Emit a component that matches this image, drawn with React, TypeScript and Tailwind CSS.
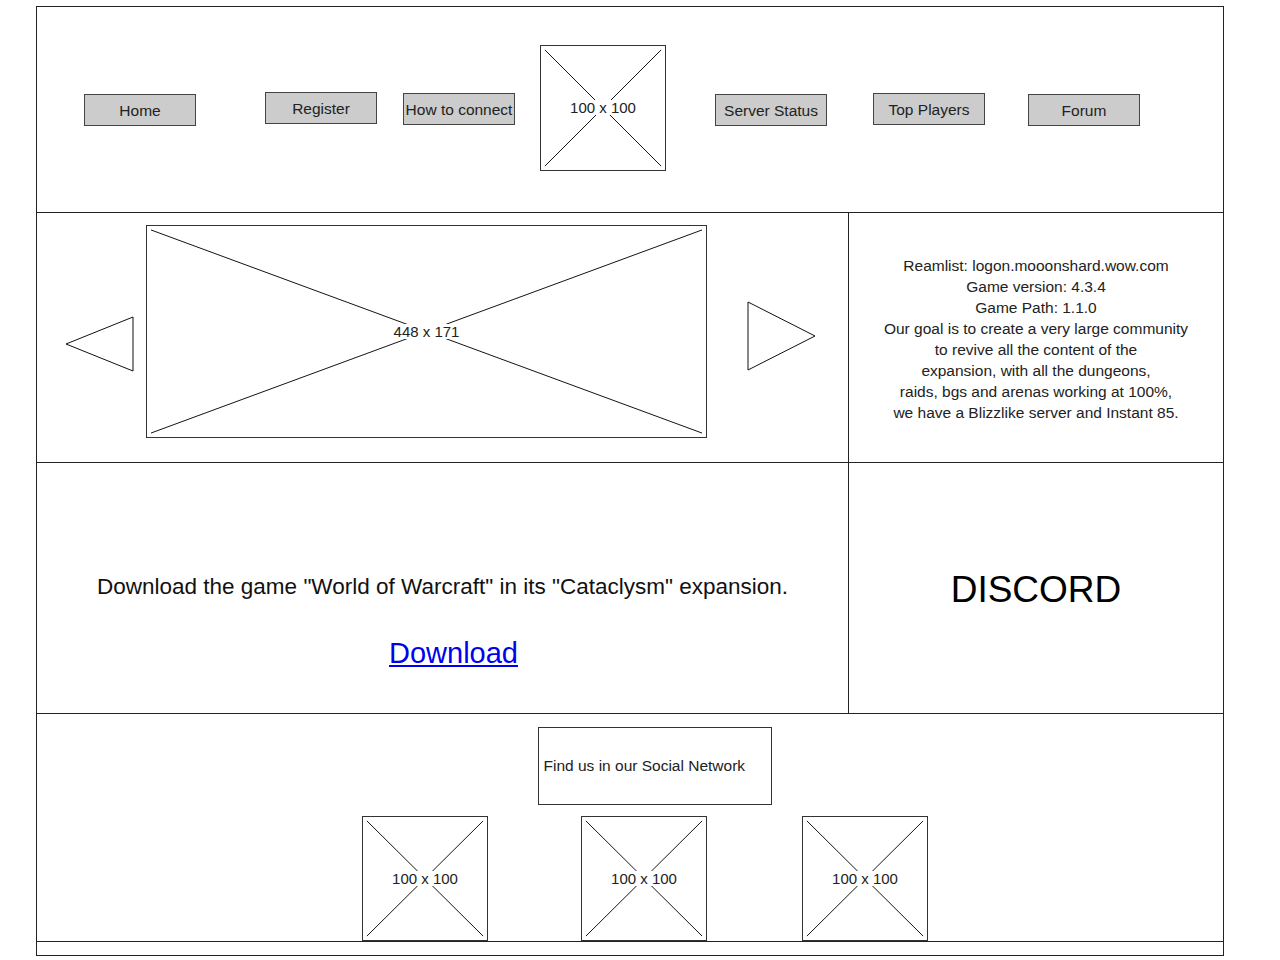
import React from 'react';

const font = { fontFamily: '"Liberation Sans", Arial, sans-serif' };

const NavButton = ({ label, className = '' }: { label: string; className?: string }) => (
  <div
    className={`flex h-[32px] w-[112px] shrink-0 items-center justify-center whitespace-nowrap border border-[#444] bg-[#cccccc] pt-[2px] text-[15.5px] text-[#222] ${className}`}
  >
    {label}
  </div>
);

const Placeholder = ({
  w,
  h,
  label,
  className = '',
  textClass = 'text-[15px]',
}: {
  w: number;
  h: number;
  label: string;
  className?: string;
  textClass?: string;
}) => (
  <div
    className={`relative flex shrink-0 items-center justify-center border border-[#333] bg-white ${className}`}
    style={{ width: w, height: h }}
  >
    <svg className="absolute inset-0 h-full w-full" viewBox={`0 0 ${w} ${h}`} preserveAspectRatio="none">
      <line x1="4" y1="4" x2={w - 4} y2={h - 4} stroke="#111" strokeWidth="1" />
      <line x1={w - 4} y1="4" x2="4" y2={h - 4} stroke="#111" strokeWidth="1" />
    </svg>
    <span className={`relative bg-white px-[1px] leading-none text-[#222] ${textClass}`}>{label}</span>
  </div>
);

export default function App() {
  return (
    <div className="min-h-[960px] w-full bg-white pt-[6px]" style={font}>
      <div className="ml-[36px] flex w-[1188px] flex-col border border-[#222]">
        {/* header */}
        <div className="flex h-[206px] items-center border-b border-[#222]">
          <NavButton label="Home" className="ml-[47px]" />
          <NavButton label="Register" className="ml-[69px] -mt-[3px]" />
          <NavButton label="How to connect" className="ml-[26px] -mt-[2px]" />
          <Placeholder w={126} h={126} label="100 x 100" className="ml-[25px] -mt-[4px]" />
          <NavButton label="Server Status" className="ml-[49px]" />
          <NavButton label="Top Players" className="ml-[46px] -mt-[2px]" />
          <NavButton label="Forum" className="ml-[43px]" />
        </div>

        {/* slider + info */}
        <div className="flex h-[250px] border-b border-[#222]">
          <div className="flex w-[812px] items-center border-r border-[#222]">
            <svg width="70" height="58" viewBox="0 0 70 58" className="ml-[28px] mt-[12px] shrink-0">
              <polygon points="1,29 68,2 68,56" fill="white" stroke="#111" strokeWidth="1" />
            </svg>
            <Placeholder w={561} h={213} label="448 x 171" className="ml-[11px] -mt-[12px]" />
            <svg width="70" height="70" viewBox="0 0 70 70" className="ml-[40px] -mt-[4px] shrink-0">
              <polygon points="1,1 68,35 1,69" fill="white" stroke="#111" strokeWidth="1" />
            </svg>
          </div>
          <div className="flex flex-1 items-center justify-center pt-[2px]">
            <p className="text-center text-[15.5px] leading-[21px] text-[#222]">
              Reamlist: logon.mooonshard.wow.com
              <br />
              Game version: 4.3.4
              <br />
              Game Path: 1.1.0
              <br />
              Our goal is to create a very large community
              <br />
              to revive all the content of the
              <br />
              expansion, with all the dungeons,
              <br />
              raids, bgs and arenas working at 100%,
              <br />
              we have a Blizzlike server and Instant 85.
            </p>
          </div>
        </div>

        {/* download + discord */}
        <div className="flex h-[251px] border-b border-[#222]">
          <div className="flex w-[812px] flex-col items-center justify-center border-r border-[#222] pt-[68px]">
            <p className="text-[22.5px] leading-none text-[#111]">
              Download the game "World of Warcraft" in its "Cataclysm" expansion.
            </p>
            <a href="#" className="mt-[40px] ml-[22px] text-[29px] leading-none text-[#0000ee] underline">
              Download
            </a>
          </div>
          <div className="flex flex-1 items-center justify-center pt-[4px]">
            <span className="text-[37px] text-black">DISCORD</span>
          </div>
        </div>

        {/* social */}
        <div className="flex h-[228px] flex-col items-center border-b border-[#222]">
          <div className="mt-[13px] ml-[49px] flex h-[78px] w-[234px] items-center whitespace-nowrap border border-[#333] pl-[5px] text-[15.5px] text-[#222]">
            Find us in our Social Network
          </div>
          <div className="mt-[11px] flex items-end">
            <Placeholder w={126} h={125} label="100 x 100" className="ml-[30px]" />
            <Placeholder w={126} h={125} label="100 x 100" className="ml-[93px]" />
            <Placeholder w={126} h={125} label="100 x 100" className="ml-[95px]" />
          </div>
        </div>
        <div className="h-[13px]" />
      </div>
    </div>
  );
}
